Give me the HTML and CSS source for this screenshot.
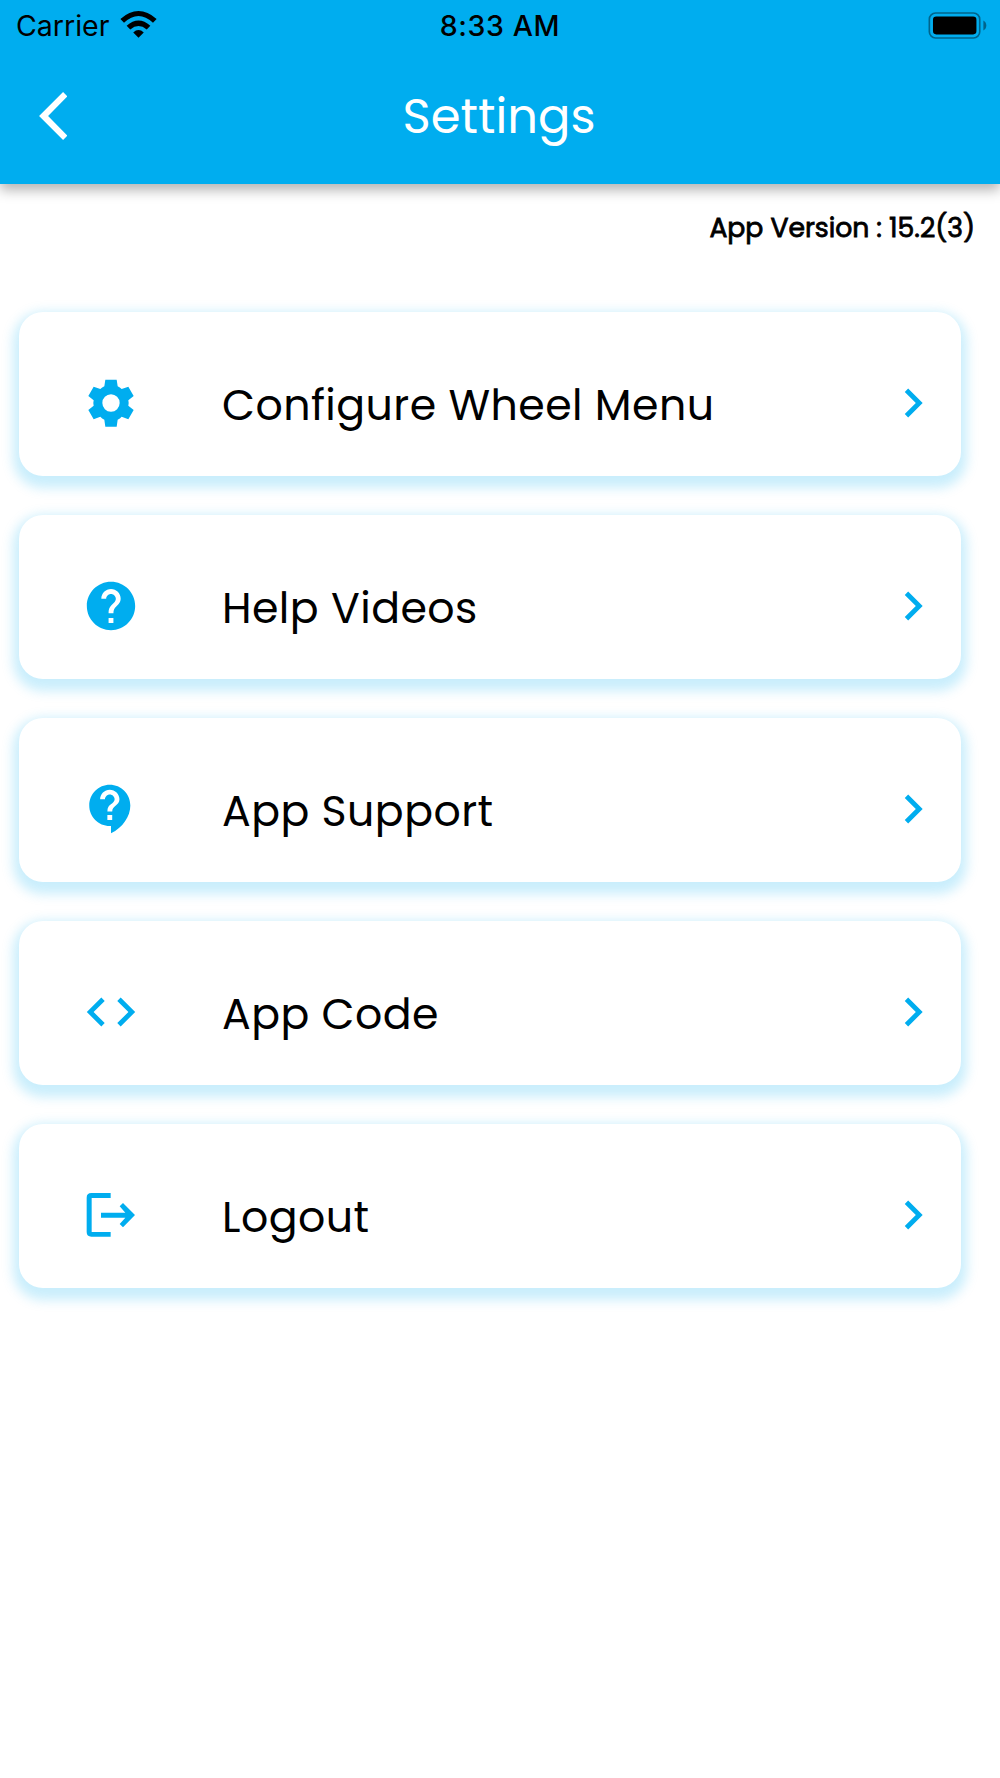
FILE: index.html
```html
<!DOCTYPE html>
<html lang="en">
<head>
    <meta charset="UTF-8">
    <meta name="viewport" content="width=device-width, initial-scale=1.0">
    <title>Settings</title>
    <link rel="stylesheet" href="styles.css">
</head>
<body>

    <header class="header">
        <div class="status-bar">
            <div class="status-left">
                <span class="carrier">Carrier</span>
                <svg class="wifi" viewBox="0 0 110 82">
                    <path d="M0 24 Q55 -24 110 24 L99 36 Q55 -5 11 36 Z"/>
                    <path d="M19 45 Q55 13 91 45 L80 56 Q55 35 30 56 Z"/>
                    <path d="M39 65 Q55 51 71 65 L55 81 Z"/>
                </svg>
            </div>
            <span class="time">8:33 AM</span>
            <div class="status-right">
                <svg class="battery" viewBox="0 0 177 82">
                    <rect class="battery-frame" x="3" y="3" width="153" height="76" rx="19"/>
                    <rect x="14" y="14" width="132" height="54" rx="10"/>
                    <path class="battery-tip" d="M167 26 Q176 31 176 41 Q176 51 167 56 Z"/>
                </svg>
            </div>
        </div>
        <div class="nav-bar">
            <a href="#" class="back">
                <svg viewBox="116 276 85 144"><path d="M188 276L201 289L143 348L201 407L188 420L116 348Z"/></svg>
            </a>
            <h1 class="title">Settings</h1>
        </div>
    </header>

    <p class="version">App Version : 15.2(3)</p>

    <main class="menu">
        <a href="#" class="card">
            <svg class="icon" viewBox="247 253 174 174"><path fill-rule="evenodd" d="M317 270H351L354 290Q361 293 366 298L386 291L402 319L386 332Q388 340 386 348L402 361L386 389L366 381Q361 387 354 390L351 411H317L314 390Q307 387 302 381L282 389L266 361L282 348Q280 340 282 332L266 319L282 291L302 298Q307 293 314 290ZM334 314A26 26 0 1 0 334 366A26 26 0 1 0 334 314Z"/></svg>
            <span class="label">Configure Wheel Menu</span>
            <svg class="icon" viewBox="0 0 24 24"><path d="M10 6L8.59 7.41 13.17 12l-4.58 4.59L10 18l6-6z"/></svg>
        </a>
        <a href="#" class="card">
            <svg class="icon" viewBox="0 0 24 24"><path d="M12 2C6.48 2 2 6.48 2 12s4.48 10 10 10 10-4.48 10-10S17.52 2 12 2zm1 17h-2v-2h2v2zm2.07-7.75l-.9.92C13.45 12.9 13 13.5 13 15h-2v-.5c0-1.1.45-2.1 1.17-2.83l1.24-1.26c.37-.36.59-.86.59-1.41 0-1.1-.9-2-2-2s-2 .9-2 2H8c0-2.21 1.79-4 4-4s4 1.79 4 4c0 .88-.36 1.68-.93 2.25z"/></svg>
            <span class="label">Help Videos</span>
            <svg class="icon" viewBox="0 0 24 24"><path d="M10 6L8.59 7.41 13.17 12l-4.58 4.59L10 18l6-6z"/></svg>
        </a>
        <a href="#" class="card">
            <svg class="icon" viewBox="0 0 24 24"><path d="M11.5 2C6.81 2 3 5.81 3 10.5S6.81 19 11.5 19h.5v3c4.86-2.34 8-7 8-11.5C20 5.81 16.19 2 11.5 2zm1 14.5h-2v-2h2v2zm0-3.5h-2c0-3.25 3-3 3-5 0-1.1-.9-2-2-2s-2 .9-2 2h-2c0-2.21 1.79-4 4-4s4 1.79 4 4c0 2.5-3 2.75-3 5z"/></svg>
            <span class="label">App Support</span>
            <svg class="icon" viewBox="0 0 24 24"><path d="M10 6L8.59 7.41 13.17 12l-4.58 4.59L10 18l6-6z"/></svg>
        </a>
        <a href="#" class="card">
            <svg class="icon" viewBox="0 0 24 24"><path d="M9.4 16.6L4.8 12l4.6-4.6L8 6l-6 6 6 6 1.4-1.4zm5.2 0l4.6-4.6-4.6-4.6L16 6l6 6-6 6-1.4-1.4z"/></svg>
            <span class="label">App Code</span>
            <svg class="icon" viewBox="0 0 24 24"><path d="M10 6L8.59 7.41 13.17 12l-4.58 4.59L10 18l6-6z"/></svg>
        </a>
        <a href="#" class="card">
            <svg class="icon" viewBox="67 63 174 174"><path d="M153 84V99H96V201H153V215H95Q81 215 81 201V98Q81 84 95 84ZM124 143H197L180 124L190 114L226 150L190 187L180 177L197 158H124Z"/></svg>
            <span class="label">Logout</span>
            <svg class="icon" viewBox="0 0 24 24"><path d="M10 6L8.59 7.41 13.17 12l-4.58 4.59L10 18l6-6z"/></svg>
        </a>
    </main>

</body>
</html>
```
FILE: styles.css
```css
body {
    margin: 0;
    min-height: 100vh;
    background-color: #fff;
    color: #000;
    font-family: Poppins, Inter, sans-serif;
}

.header {
    height: 184px;
    background-color: #00adef;
    box-shadow: 0 6px 12px rgba(0, 0, 0, 0.3);
}

/* Status bar */
.status-bar {
    display: grid;
    grid-template-columns: 1fr auto 1fr;
    align-items: center;
    box-sizing: border-box;
    height: 48px;
    padding: 1px 13px 0 16px;
    font-family: Inter, sans-serif;
    font-size: 28.5px;
    line-height: 46px;
}

.status-left {
    display: flex;
    align-items: center;
    gap: 11px;
}

.carrier {
    padding-top: 2px;
}

.wifi {
    width: 37px;
    height: 27px;
    margin-bottom: 2px;
}

.time {
    padding: 2px 3px 0 0;
    font-weight: 550;
    letter-spacing: 0.6px;
}

.status-right {
    display: flex;
    justify-content: flex-end;
}

.battery {
    width: 59px;
    height: 27px;
}

.battery-frame {
    fill: none;
    stroke: #00648b;
    stroke-width: 5;
}

.battery-tip {
    fill: #00648b;
}

/* Title bar */
.nav-bar {
    display: grid;
    grid-template-columns: 1fr auto 1fr;
    align-items: center;
    height: 136px;
    color: #fff;
}

.back {
    padding-left: 38.5px;
}

.back svg {
    display: block;
    width: 28.5px;
    height: 48px;
    fill: #fff;
}

.title {
    margin: 0;
    padding: 2px 2px 0 0;
    font-size: 48px;
    font-weight: 400;
    line-height: 134px;
}

.version {
    margin: 23px 25px 0 0;
    text-align: right;
    font-size: 26.67px;
    font-weight: 400;
    letter-spacing: -0.03px;
    line-height: 42px;
    -webkit-text-stroke: 0.8px #000;
}

/* Menu cards */
.menu {
    display: flex;
    flex-direction: column;
    gap: 39px;
    margin: 63px 39px 0 19px;
}

.card {
    display: flex;
    align-items: center;
    box-sizing: border-box;
    height: 164px;
    padding: 18px 19px 0 63px;
    border-radius: 24px;
    background-color: #fff;
    box-shadow: 0 6px 12px 6px rgba(0, 174, 239, 0.21);
    color: #000;
    text-decoration: none;
}

.icon {
    flex: none;
    width: 58px;
    height: 58px;
    fill: #00adef;
}

.label {
    flex: 1;
    padding: 3px 0 0 82px;
    font-size: 42.67px;
    font-weight: 400;
    letter-spacing: 0.45px;
    line-height: 58px;
}
```
